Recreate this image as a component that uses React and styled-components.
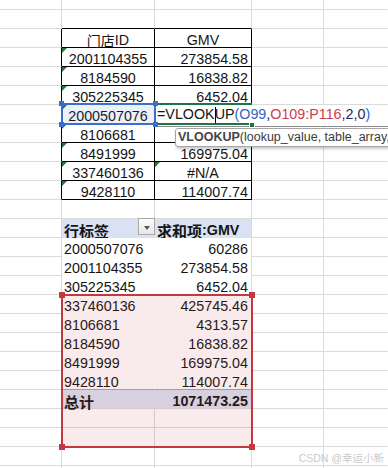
import React from 'react';
import styled, { createGlobalStyle } from 'styled-components';

const GRID = '#dadada';
const BLACK = '#000';
const HEAD_BG = '#d9e1f2';

const Global = createGlobalStyle`
  html, body { margin: 0; padding: 0; background: #fff; overflow: hidden; }
  #root { width: 388px; height: 468px; }
`;

const Sheet = styled.div`
  position: relative;
  width: 388px;
  height: 468px;
  overflow: hidden;
  display: grid;
  grid-template-columns: 62px 93px 97px 72px 1fr;
  grid-template-rows: 10px repeat(25, 19px);
  font-family: "Liberation Sans", Arial, "Noto Sans CJK SC", sans-serif;
  font-size: 14.3px;
  color: #151515;
`;

const Cell = styled.div`
  grid-row: ${(p) => p.$r + 1};
  grid-column: ${(p) => p.$c + 1};
  position: relative;
  box-sizing: border-box;
  border-right: 1px solid ${(p) => p.$right};
  border-bottom: 1px solid ${(p) => p.$bottom};
  background: ${(p) => p.$bg || 'transparent'};
  display: flex;
  align-items: flex-end;
  justify-content: ${(p) =>
    p.$align === 'right' ? 'flex-end' : p.$align === 'center' ? 'center' : 'flex-start'};
  padding: 0 ${(p) => (p.$align === 'right' ? '3px' : '0')} 0
    ${(p) => (p.$align === 'left' ? '2px' : '0')};
  line-height: 13px;
  font-weight: ${(p) => (p.$bold ? 700 : 400)};
  white-space: nowrap;
`;

const Cjk = styled.span`
  font-family: "Noto Sans CJK SC", sans-serif;
  font-size: ${(p) => p.$size || 14}px;
`;

const Triangle = styled.span`
  position: absolute;
  top: 0;
  left: 0;
  width: 0;
  height: 0;
  border-top: 5px solid #1e7b34;
  border-right: 5px solid transparent;
`;

const FilterBtn = styled.span`
  position: absolute;
  right: -1px;
  top: -1px;
  width: 17px;
  height: 17px;
  box-sizing: border-box;
  border: 1px solid #a9a9a9;
  background: linear-gradient(#fdfdfd, #e6e6e6);
  display: flex;
  align-items: center;
  justify-content: center;
  &::after {
    content: '';
    border-left: 3px solid transparent;
    border-right: 3px solid transparent;
    border-top: 4px solid #555;
    margin-top: 2px;
  }
`;

const Area = styled.div`
  grid-row: ${(p) => p.$row};
  grid-column: ${(p) => p.$col};
  position: relative;
  z-index: ${(p) => p.$z || 2};
  pointer-events: none;
`;

const EditArea = styled(Area)`
  display: flex;
  align-items: flex-end;
  padding-left: 2px;
  padding-bottom: 1px;
  line-height: 13px;
  white-space: nowrap;
`;

const RefBox = styled.div`
  position: absolute;
  top: ${(p) => p.$top}px;
  left: -1px;
  right: -1px;
  bottom: -1px;
  border: 2px solid ${(p) => p.$color};
  background: ${(p) => p.$fill};
`;

const Handle = styled.span`
  position: absolute;
  width: ${(p) => p.$size}px;
  height: ${(p) => p.$size}px;
  background: ${(p) => p.$color};
  ${(p) => (p.$v === 'top' ? 'top' : 'bottom')}: -4px;
  ${(p) => (p.$h === 'left' ? 'left' : 'right')}: -4px;
`;

const EditorBg = styled.div`
  position: absolute;
  left: 0;
  right: 0;
  top: 0;
  bottom: -3px;
  background: #fff;
  border-bottom: 1px solid #8c8c8c;
`;

const GreenFrame = styled.div`
  position: absolute;
  left: -1px;
  top: -2px;
  width: 98px;
  height: 22px;
  box-sizing: border-box;
  border-top: 2px solid #217346;
  border-bottom: 2px solid #217346;
`;

const FillHandle = styled.span`
  position: absolute;
  left: 94px;
  top: 17px;
  width: 6px;
  height: 6px;
  box-sizing: border-box;
  background: #217346;
  border: 1px solid #fff;
`;

const Formula = styled.span`
  position: relative;
  color: #151515;
`;

const Tok = styled.span`
  color: ${(p) => p.$color};
`;

const Caret = styled.span`
  display: inline-block;
  width: 1px;
  height: 16px;
  margin-right: -1px;
  background: #000;
  vertical-align: -4px;
`;

const Tooltip = styled.div`
  position: absolute;
  top: 23px;
  left: 20px;
  width: max-content;
  height: 19px;
  box-sizing: border-box;
  padding: 0 30px 0 2px;
  border: 1px solid #a6a6a6;
  border-radius: 3px;
  background: #fff;
  box-shadow: 1px 2px 3px rgba(0, 0, 0, 0.22);
  font-family: "Liberation Sans", Arial, sans-serif;
  font-size: 12.5px;
  line-height: 17px;
  color: #3a3a3a;
  white-space: nowrap;
  b {
    color: #444;
  }
`;

const Watermark = styled.div`
  position: absolute;
  right: 4px;
  top: 450px;
  font-family: "Liberation Sans", "Noto Sans CJK SC", sans-serif;
  font-size: 10.5px;
  color: #cacaca;
  z-index: 6;
`;

const C = (t, s) => <Cjk $size={s}>{t}</Cjk>;

const content = {
  '2-1': { t: <>{C('门店', 14)}ID</>, a: 'center' },
  '2-2': { t: 'GMV', a: 'center' },
  '3-1': { t: '2001104355', a: 'center', tri: true },
  '3-2': { t: '273854.58', a: 'right' },
  '4-1': { t: '8184590', a: 'center', tri: true },
  '4-2': { t: '16838.82', a: 'right' },
  '5-1': { t: '305225345', a: 'center', tri: true },
  '5-2': { t: '6452.04', a: 'right' },
  '6-1': { t: '2000507076', a: 'center', tri: true },
  '7-1': { t: '8106681', a: 'center', tri: true },
  '7-2': { t: '4313.57', a: 'right' },
  '8-1': { t: '8491999', a: 'center', tri: true },
  '8-2': { t: '169975.04', a: 'right' },
  '9-1': { t: '337460136', a: 'center', tri: true },
  '9-2': { t: '#N/A', a: 'center', tri: true },
  '10-1': { t: '9428110', a: 'center', tri: true },
  '10-2': { t: '114007.74', a: 'right' },
  '12-1': { t: C('行标签', 15), a: 'left', b: true, filter: true },
  '12-2': { t: <>{C('求和项', 15)}:GMV</>, a: 'left', b: true },
  '13-1': { t: '2000507076', a: 'left' },
  '13-2': { t: '60286', a: 'right' },
  '14-1': { t: '2001104355', a: 'left' },
  '14-2': { t: '273854.58', a: 'right' },
  '15-1': { t: '305225345', a: 'left' },
  '15-2': { t: '6452.04', a: 'right' },
  '16-1': { t: '337460136', a: 'left' },
  '16-2': { t: '425745.46', a: 'right' },
  '17-1': { t: '8106681', a: 'left' },
  '17-2': { t: '4313.57', a: 'right' },
  '18-1': { t: '8184590', a: 'left' },
  '18-2': { t: '16838.82', a: 'right' },
  '19-1': { t: '8491999', a: 'left' },
  '19-2': { t: '169975.04', a: 'right' },
  '20-1': { t: '9428110', a: 'left' },
  '20-2': { t: '114007.74', a: 'right' },
  '21-1': { t: C('总计', 15), a: 'left', b: true },
  '21-2': { t: '1071473.25', a: 'right', b: true },
};

function frame(r, c) {
  let right = c === 4 ? 'transparent' : GRID;
  let bottom = GRID;
  let bg;
  const inTable = r >= 2 && r <= 10;
  if (inTable && (c === 1 || c === 2)) {
    right = BLACK;
    bottom = BLACK;
  }
  if (inTable && c === 0) right = BLACK;
  if (r === 1 && (c === 1 || c === 2)) bottom = BLACK;
  if (r >= 12 && r <= 21 && (c === 1 || c === 2)) {
    bg = r === 12 || r === 21 ? HEAD_BG : '#fff';
    if (c === 1) right = 'transparent';
    if (r <= 20) bottom = r === 20 ? '#8ea9db' : 'transparent';
  }
  return { right, bottom, bg };
}

const corners = [
  ['top', 'left'],
  ['top', 'right'],
  ['bottom', 'left'],
  ['bottom', 'right'],
];

export default function App() {
  const cells = [];
  for (let r = 0; r < 26; r++) {
    for (let c = 0; c < 5; c++) {
      const f = frame(r, c);
      const d = content[`${r}-${c}`];
      cells.push(
        <Cell
          key={`${r}-${c}`}
          $r={r}
          $c={c}
          $right={f.right}
          $bottom={f.bottom}
          $bg={f.bg}
          $align={d ? d.a : 'left'}
          $bold={d && d.b}
        >
          {d && d.tri && <Triangle />}
          {d && d.t}
          {d && d.filter && <FilterBtn />}
        </Cell>
      );
    }
  }

  return (
    <>
      <Global />
      <Sheet>
        {cells}

        <EditArea $row={7} $col="3 / 6" $z={4}>
          <EditorBg />
          <GreenFrame />
          <FillHandle />
          <Formula>
            =VLOOK
            <Caret />
            UP<Tok $color="#2f66c8">(O99</Tok>,<Tok $color="#d23a4c">O109:P116</Tok>
            <Tok $color="#1f2a5c">,2,0</Tok>
            <Tok $color="#2f66c8">)</Tok>
          </Formula>
          <Tooltip>
            <b>VLOOKUP</b>(lookup_value, table_array,
          </Tooltip>
        </EditArea>

        <Area $row={7} $col="2 / 3" $z={5}>
          <RefBox $top={-2} $color="#3c6fcc" $fill="rgba(68,114,196,0.1)">
            {corners.map(([v, h]) => (
              <Handle key={v + h} $v={v} $h={h} $size={5} $color="#3c6fcc" />
            ))}
          </RefBox>
        </Area>

        <Area $row="17 / 25" $col="2 / 4" $z={3}>
          <RefBox $top={-1} $color="#c2393f" $fill="rgba(192,56,63,0.1)">
            {corners.map(([v, h]) => (
              <Handle key={v + h} $v={v} $h={h} $size={6} $color="#c2393f" />
            ))}
          </RefBox>
        </Area>

        <Watermark>
          CSDN @<Cjk $size={10.5}>幸运小新</Cjk>
        </Watermark>
      </Sheet>
    </>
  );
}
